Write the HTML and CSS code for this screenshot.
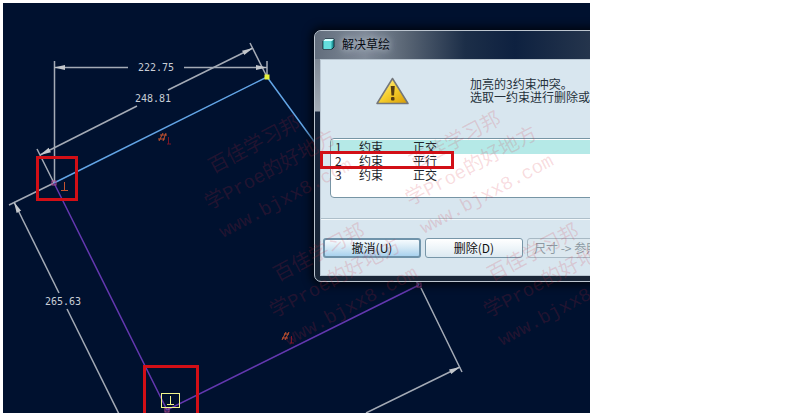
FILE: index.html
```html
<!DOCTYPE html>
<html lang="zh-CN">
  <head>
    <meta charset="utf-8">
    <title>解决草绘</title>
    <link rel="stylesheet" href="styles.css">
  </head>
  <body>
    <main class="stage">
      <!-- sketch geometry and dimensions -->
      <svg class="sketch" viewBox="3 3 587 410" preserveAspectRatio="xMinYMin slice">
        <defs>
          <marker id="arrow" markerWidth="12" markerHeight="6" refX="11" refY="3" orient="auto-start-reverse" markerUnits="userSpaceOnUse">
            <path d="M0 0.500L11 3L0 5.500Z" fill="#c3c7cc"/>
          </marker>
        </defs>
        <g class="dim">
          <path d="M54.500 61V183M267 61V77M250 43L267 77M37 149L54 183M9 205L54 183M421 288L462 372"/>
          <path d="M54 67.500H128" marker-start="url(#arrow)"/>
          <path d="M184 67.500H267" marker-end="url(#arrow)"/>
          <path d="M40 155L137 106" marker-start="url(#arrow)"/>
          <path d="M168 90L253 48" marker-end="url(#arrow)"/>
          <path d="M14 202L59 293" marker-start="url(#arrow)"/>
          <path d="M67 309L119 414"/>
          <path d="M366 413L460 367" marker-end="url(#arrow)"/>
        </g>
        <path class="edge" d="M54 183L267 77L419 285"/>
        <path class="edge picked" d="M54 183L167 410L419 285"/>
        <rect x="264.500" y="74.500" width="5" height="5" fill="#e6f23c"/>
        <g class="vertex">
          <rect x="52" y="181" width="4" height="4"/>
          <rect x="165" y="408" width="4" height="4"/>
          <rect x="417" y="283" width="4" height="4"/>
        </g>
        <g class="dim-text">
          <text x="138" y="71">222.75</text>
          <text x="135" y="102">248.81</text>
          <text x="45" y="305">265.63</text>
        </g>
        <!-- constraint marks -->
        <g class="mark">
          <path d="M61 190.500H68M64.500 182V190"/>
          <path d="M159 141L163 133M163 141L166 133M158 139H165M160 135H167"/>
          <path d="M282 340L286 332M285 340L289 332M282 338H288M284 334H289"/>
          <path class="dark" d="M168.500 137V144M167 144H171M291.500 336V343M290 343H294"/>
        </g>
        <g class="mark active">
          <rect x="161.500" y="393.500" width="18" height="14"/>
          <path d="M170.500 396V404M167 404.500H174"/>
        </g>
      </svg>

      <section class="dialog">
        <header class="titlebar">
          <svg class="cube" width="13" height="12" viewBox="0 0 13 12">
            <path d="M1 3L3 1H12V9L10 11H1Z" fill="#239c9f" stroke="#0d2b35"/>
            <path d="M1 3L3 1H12L10 3Z" fill="#d8ffff"/>
            <rect x="1.500" y="3" width="8" height="8" fill="#65dddd"/>
          </svg>
          <h1>解决草绘</h1>
        </header>
        <div class="content">
          <div class="message">
            <svg width="33" height="28" viewBox="0 0 33 28">
              <defs>
                <linearGradient id="warn" x1="0" y1="0" x2="1" y2="1">
                  <stop offset="0" stop-color="#fff8ae"/>
                  <stop offset=".5" stop-color="#f6cf2e"/>
                  <stop offset="1" stop-color="#d69a05"/>
                </linearGradient>
              </defs>
              <path d="M16.500 1.500L32 26.500H1Z" fill="url(#warn)" stroke="#74777b" stroke-width="1.500" stroke-linejoin="round"/>
              <path d="M14.700 9H18.800L18 18.500H15.500Z" fill="#553c13"/>
              <rect x="15" y="20" width="3.500" height="3.500" rx="1" fill="#553c13"/>
            </svg>
            <p>加亮的3约束冲突。<br>选取一约束进行删除或</p>
          </div>
          <div class="list">
            <table>
              <tbody>
                <tr class="selected"><td>1</td><td>约束</td><td>正交</td></tr>
                <tr><td>2</td><td>约束</td><td>平行</td></tr>
                <tr><td>3</td><td>约束</td><td>正交</td></tr>
              </tbody>
            </table>
          </div>
          <div class="actions">
            <button class="btn default" type="button">撤消(U)</button>
            <button class="btn" type="button">删除(D)</button>
            <button class="btn" type="button" disabled>尺寸 -&gt; 参照</button>
          </div>
        </div>
      </section>

      <!-- watermark and callouts lie over everything -->
      <svg class="overlay" viewBox="3 3 587 410" preserveAspectRatio="xMinYMin slice">
        <defs>
          <g id="watermark">
            <text transform="translate(213 174) rotate(-28)">百佳学习邦</text>
            <text transform="translate(209 210) rotate(-28)">学<tspan class="latin">Proe</tspan>的好地方</text>
            <text class="latin" transform="translate(223 238) rotate(-28)">www.bjxx8.com</text>
          </g>
        </defs>
        <g class="watermark">
          <use href="#watermark"/>
          <use href="#watermark" x="201" y="-4"/>
          <use href="#watermark" x="65" y="108"/>
          <use href="#watermark" x="279" y="108"/>
        </g>
        <g class="callout">
          <rect x="37.500" y="157.500" width="39" height="42"/>
          <rect x="144.500" y="366.500" width="53" height="60"/>
          <rect x="321.500" y="152.500" width="131" height="15"/>
        </g>
      </svg>
    </main>
  </body>
</html>
```

FILE: styles.css
```css
*{
    box-sizing: border-box;
    margin: 0;
    padding: 0;
}
body{
    background-color: white;
    font-family: "Noto Sans CJK SC", sans-serif;
    font-size: 12px;
}
.stage{
    position: relative;
    height: calc(100vh - 3px);
    margin: 3px 201px 0 3px;
    overflow: hidden;
    background-color: #00112f;
}
.sketch, .overlay{
    position: absolute;
    top: 0;
    left: 0;
    width: 100%;
    height: 100%;
}
.overlay{
    pointer-events: none;
}

/* sketch */
.dim{
    fill: none;
    stroke: #a4abb6;
    stroke-width: 1.5;
}
.dim-text{
    fill: #c8ced6;
    font-family: "DejaVu Sans Mono", monospace;
    font-size: 10px;
}
.edge{
    fill: none;
    stroke: #62a5e6;
    stroke-width: 1.5;
}
.edge.picked{
    stroke: #6338b0;
}
.vertex{
    fill: none;
    stroke: #a8488f;
}
.mark{
    fill: none;
    stroke: #c4532f;
}
.mark .dark{
    stroke: #7a1628;
}
.mark.active{
    stroke: #f1f58c;
}

/* dialog window */
.dialog{
    position: absolute;
    top: 27px;
    left: 311px;
    width: 420px;
    padding: 0 5px 5px;
    border: 1px solid #bcc5cf;
    border-radius: 7px;
    background: linear-gradient(#6c7683, #a3abb5 80px, #16243a 81px, #1a2637);
    box-shadow: 0 0 8px 3px rgba(0, 0, 0, 0.7);
}
.titlebar{
    display: flex;
    align-items: center;
    gap: 7px;
    height: 28px;
    margin: 0 -5px;
    padding: 0 7px 2px;
    border-radius: 6px 6px 0 0;
    background: linear-gradient(90deg, #626d7c, #7f8a98 50px, #5a6675 90px, #1c2e48 150px, #0e2140 200px, #26364d 280px);
}
.titlebar h1{
    font-size: 12px;
    font-weight: 400;
    line-height: 16px;
    color: #050a12;
    text-shadow: 0 0 6px #b5bec9, 0 0 8px #b5bec9;
}
.content{
    border: 1px solid #b9c6d1;
    background-color: #d8e6ef;
}
.message{
    display: flex;
    gap: 61px;
    height: 78px;
    padding: 17px 0 0 55px;
    color: #26323c;
}
.message p{
    line-height: 13px;
    white-space: nowrap;
}
.list{
    height: 60px;
    margin: 0 9px;
    padding-top: 1px;
    border: 1px solid #7795a5;
    border-radius: 4px;
    background-color: white;
}
.list table{
    width: 100%;
    border-collapse: collapse;
    table-layout: fixed;
}
.list td{
    height: 14px;
    padding-left: 4px;
    line-height: 14px;
    color: #1d252c;
}
.list td:nth-child(1){
    width: 24px;
}
.list td:nth-child(2){
    width: 54px;
}
.list .selected{
    background-color: #b5e9e7;
}
.actions{
    display: flex;
    gap: 4px;
    margin-top: 20px;
    padding: 19px 2px 17px;
    border-top: 1px solid #aebfca;
    box-shadow: inset 0 1px #f2f8fb;
}
.btn{
    flex: none;
    width: 98px;
    height: 20px;
    border: 1px solid #7896a8;
    border-radius: 3px;
    background: linear-gradient(#ffffff, #eef5f9 50%, #dce9f1);
    font-family: inherit;
    font-size: 12px;
    line-height: 16px;
    color: #111;
}
.btn.default{
    border: 2px solid #6f93aa;
    background: linear-gradient(#f6fbfe, #d3e8f5 50%, #a9d2ee);
}
.btn:disabled{
    padding-left: 6px;
    border-color: #a8b9c4;
    background: #dce8ef;
    text-align: left;
    color: #8d9aa3;
}

/* watermark and red callouts */
.watermark{
    fill: rgba(214, 40, 60, 0.17);
    font-size: 20px;
}
.latin{
    font-family: "Liberation Mono", monospace;
    font-size: 19px;
}
.callout{
    fill: none;
    stroke: #d20f16;
    stroke-width: 3px;
}
```
